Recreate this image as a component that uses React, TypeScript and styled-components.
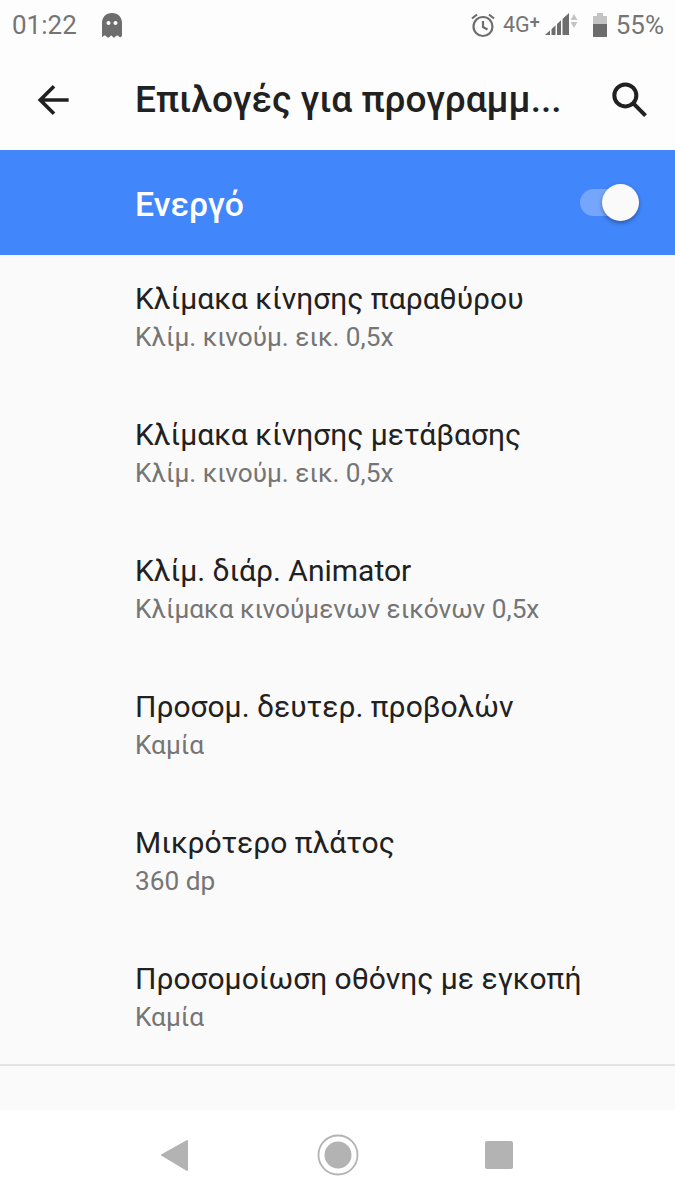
import React from 'react'
import styled, { createGlobalStyle } from 'styled-components'

const Global = createGlobalStyle`
    html, body {
        margin: 0;
        padding: 0;
        background: #fafafa;
    }
    * {
        box-sizing: border-box;
    }
`
const Screen = styled.div`
    width: 675px;
    height: 1200px;
    display: flex;
    flex-direction: column;
    font-family: Roboto, "Noto Sans", sans-serif;
    background: #fafafa;
    overflow: hidden;
`
const StatusBar = styled.div`
    height: 50px;
    flex: none;
    padding: 0 11px 0 12px;
    display: flex;
    align-items: center;
    justify-content: space-between;
    background: #fdfdfd;
    color: #757575;
    font-size: 26px;
`
const StatusGroup = styled.div`
    display: flex;
    align-items: center;
`
const Clock = styled.span`
    margin-right: 24px;
`
const Network = styled.span`
    font-size: 21.5px;
    margin: 0 4px 0 7px;
    display: flex;
    align-items: flex-start;
    line-height: 26px;
`
const NetworkPlus = styled.span`
    font-size: 18px;
    font-weight: 500;
    line-height: 20px;
`
const Percent = styled.span`
    margin-left: 8px;
`
const Toolbar = styled.div`
    height: 100px;
    flex: none;
    display: flex;
    align-items: center;
    background: #fdfdfd;
    padding: 0 24px 0 34px;
`
const Title = styled.div`
    flex: 1;
    margin-left: 59px;
    padding-bottom: 2px;
    font-size: 37.1px;
    font-weight: 500;
    color: #212121;
    white-space: nowrap;
`
const MasterBar = styled.div`
    height: 105px;
    flex: none;
    display: flex;
    align-items: center;
    justify-content: space-between;
    padding: 0 39px 0 135px;
    background: #4286fb;
    color: #fff;
    font-size: 33.75px;
    font-weight: 500;
`
const MasterLabel = styled.span`
    padding-top: 4px;
`
const SwitchTrack = styled.div`
    width: 56px;
    height: 27px;
    border-radius: 14px;
    background: #76a6fc;
    position: relative;
`
const SwitchThumb = styled.div`
    position: absolute;
    right: -3px;
    top: -5px;
    width: 37px;
    height: 37px;
    border-radius: 50%;
    background: #fafafa;
    box-shadow: 0 2px 4px rgba(0, 0, 0, 0.35);
`
const List = styled.div`
    flex: 1;
    padding-top: 23px;
    display: flex;
    flex-direction: column;
`
const Item = styled.div`
    height: 136px;
    flex: none;
    padding-left: 135px;
`
const ItemTitle = styled.div`
    font-size: 30px;
    line-height: 41px;
    color: #212121;
`
const ItemValue = styled.div`
    font-size: 26.2px;
    line-height: 36px;
    color: #757575;
`
const Divider = styled.div`
    height: 2px;
    flex: none;
    background: #e3e3e3;
    margin-top: -30px;
`
const NavBar = styled.div`
    height: 90px;
    flex: none;
    display: grid;
    grid-template-columns: 159px 167px 30px;
    justify-content: start;
    padding-left: 158px;
    align-items: center;
    background: #fff;
`

const items = [
    ['Κλίμακα κίνησης παραθύρου', 'Κλίμ. κινούμ. εικ. 0,5x'],
    ['Κλίμακα κίνησης μετάβασης', 'Κλίμ. κινούμ. εικ. 0,5x'],
    ['Κλίμ. διάρ. Animator', 'Κλίμακα κινούμενων εικόνων 0,5x'],
    ['Προσομ. δευτερ. προβολών', 'Καμία'],
    ['Μικρότερο πλάτος', '360 dp'],
    ['Προσομοίωση οθόνης με εγκοπή', 'Καμία'],
]

const App = () => {
    return <Screen>
        <Global />
        <StatusBar>
            <StatusGroup>
                <Clock>01:22</Clock>
                <svg width="22" height="26" viewBox="0 0 22 26">
                    <path fill="#6d6d6d" fillRule="evenodd" d="M1 11C1 5 5 1 11 1s10 4 10 10v12c0 2-2 3-3 1.500-1-1.500-2.500-1.500-3.500 0s-2 1.500-3 0-1.500-1.500-2.500 0-2.500 1.500-3.500 0-2.500-1.500-3.500 0S1 25 1 23zM7.500 9a2 2 0 1 0 .01 0zM14.500 9a2 2 0 1 0 .01 0z" />
                </svg>
            </StatusGroup>
            <StatusGroup>
                <svg width="26" height="26" viewBox="0 0 26 26" fill="none" stroke="#6d6d6d" strokeWidth="2.200">
                    <circle cx="13" cy="14.500" r="9.500" />
                    <path d="M13 9v6l4.500 2.500M2 6.500 7 2.500M24 6.500l-5-4" />
                </svg>
                <Network>4G<NetworkPlus>+</NetworkPlus></Network>
                <svg width="38" height="26" viewBox="0 0 38 26">
                    <path fill="#6d6d6d" d="M1 23 25 1v22z" />
                    <path fill="#fdfdfd" d="M6 24V16h1.500v8zM11.500 24V10h1.500v14zM17 24V7h1.500v17z" />
                    <path fill="#c4c4c4" d="M30 2l3.500 6h-7zM30 16l-3.500-6h7z" />
                </svg>
                <svg width="16" height="26" viewBox="0 0 16 26" style={{ marginLeft: 10 }}>
                    <path fill="#c4c4c4" d="M5 1h6v3h4v9H1V4h4z" />
                    <path fill="#6d6d6d" d="M1 12h14v13H1z" />
                </svg>
                <Percent>55%</Percent>
            </StatusGroup>
        </StatusBar>
        <Toolbar>
            <svg width="44" height="44" viewBox="0 0 24 24" fill="none" stroke="#212121" strokeWidth="2" style={{ marginLeft: -2, flex: 'none' }}>
                <path d="M20 12H5M12 4.500 4.500 12l7.500 7.500" />
            </svg>
            <Title>Επιλογές για προγραμμ...</Title>
            <svg width="44" height="44" viewBox="0 0 24 24" fill="none" stroke="#212121" strokeWidth="2.200" style={{ flex: 'none' }}>
                <circle cx="10" cy="9.500" r="6" />
                <path d="m14.500 14 6.500 6.500" />
            </svg>
        </Toolbar>
        <MasterBar>
            <MasterLabel>Ενεργό</MasterLabel>
            <SwitchTrack><SwitchThumb /></SwitchTrack>
        </MasterBar>
        <List>
            {items.map(([title, value]) => <Item key={title}>
                <ItemTitle>{title}</ItemTitle>
                <ItemValue>{value}</ItemValue>
            </Item>)}
            <Divider />
        </List>
        <NavBar>
            <svg width="32" height="32" viewBox="0 0 32 32">
                <path fill="#b3b3b3" stroke="#b3b3b3" strokeWidth="2" strokeLinejoin="round" d="M4 16 29 2v29z" />
            </svg>
            <svg width="42" height="42" viewBox="0 0 42 42">
                <circle cx="21" cy="21" r="19.500" fill="none" stroke="#b3b3b3" strokeWidth="1.800" />
                <circle cx="21" cy="21" r="13.500" fill="#b3b3b3" />
            </svg>
            <svg width="30" height="30" viewBox="0 0 30 30">
                <rect x="1" y="1" width="28" height="28" rx="2" fill="#b3b3b3" />
            </svg>
        </NavBar>
    </Screen>
}
export default App
